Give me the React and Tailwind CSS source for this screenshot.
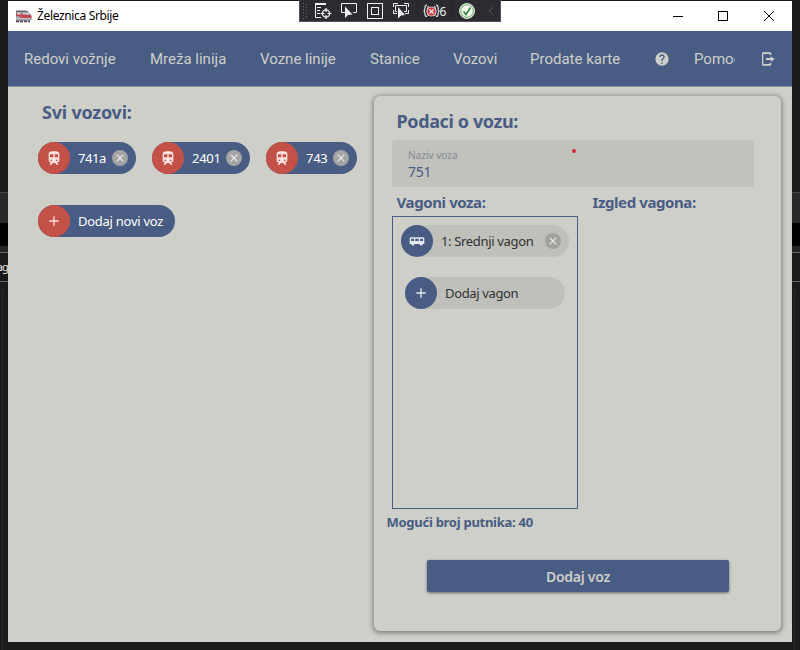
import React from "react";

const NAV = [
  { label: "Redovi vožnje", box: "w-[126px]" },
  { label: "Mreža linija", box: "w-[110px]" },
  { label: "Vozne linije", box: "w-[110px]" },
  { label: "Stanice", box: "w-[83px]" },
  { label: "Vozovi", box: "w-[77px]" },
  { label: "Prodate karte", box: "w-[125px]" },
];

const PATHS = {
  train:
    "M12 2C8 2 4 2.5 4 6V15.5A3.5 3.5 0 0 0 7.500 19L5.500 21V22H8L10.500 19.500H13.500L16 22H18.500V21L16.500 19A3.500 3.500 0 0 0 20 15.500V6C20 2.500 16.420 2 12 2M8 16.700A1.300 1.300 0 1 1 8 14.100A1.300 1.300 0 0 1 8 16.700M11 11H6V6.500H11V11M13 11V6.500H18V11H13M16 16.700A1.300 1.300 0 1 1 16 14.100A1.300 1.300 0 0 1 16 16.700Z",
  plus: "M19 13H13V19H11V13H5V11H11V5H13V11H19V13Z",
  wagon:
    "M3 6.500C1.900 6.500 1 7.400 1 8.500V16.500H3.500A2.300 2.300 0 0 0 8.100 16.500H15.900A2.300 2.300 0 0 0 20.500 16.500H23V8.500C23 7.400 22.100 6.500 21 6.500ZM3 8.500H7.500V12H3ZM9.500 8.500H14.500V12H9.500ZM16.500 8.500H21V12H16.500Z",
  help:
    "M15.07 11.25L14.17 12.17C13.45 12.89 13 13.5 13 15H11V14.5C11 13.39 11.45 12.39 12.17 11.67L13.41 10.41C13.78 10.05 14 9.55 14 9A2 2 0 0 0 10 9H8A4 4 0 0 1 16 9C16 9.88 15.64 10.67 15.07 11.25M13 19H11V17H13M12 2A10 10 0 1 0 12 22A10 10 0 0 0 12 2Z",
  exit:
    "M14.5 6V4.5H5V19.5H14.5V18H17V20C17 21 16.2 22 15 22H5C3.8 22 3 21.1 3 20V4C3 2.9 3.8 2 5 2H15C16.2 2 17 2.9 17 4V6ZM16 8L22 12L16 16V13.5H9V10.5H16Z",
};

function Icon({ name, className }) {
  return (
    <svg viewBox="0 0 24 24" className={className} fill="currentColor">
      <path d={PATHS[name]} />
    </svg>
  );
}

function Remove({ tone }) {
  return (
    <svg viewBox="0 0 16 16" className={"h-4 w-4 shrink-0 rounded-full " + tone}>
      <path d="M4.7 4.7L11.3 11.3M11.3 4.7L4.7 11.3" stroke="#ececea" strokeWidth="1.2" />
    </svg>
  );
}

function Chip({ icon, label, box, text, dark, removable }) {
  return (
    <div
      className={
        "flex h-8 shrink-0 items-center rounded-full " +
        (dark ? "bg-[#485c84] text-white " : "bg-[#bfc0b9] text-[#303134] ") +
        box
      }
    >
      <span
        className={
          "mr-2 flex h-8 w-8 shrink-0 items-center justify-center rounded-full " +
          (dark ? "bg-[#c35148] text-[#fbe3df]" : "bg-[#485c84] text-[#e6e9ee]")
        }
      >
        <Icon name={icon} className="h-4 w-4" />
      </span>
      <span className={"flex-1 text-[13px] leading-8 whitespace-nowrap " + text}>{label}</span>
      {removable && <Remove tone={dark ? "mr-2 bg-[#a3a4a3]" : "mr-2 bg-[#a1a29e]"} />}
    </div>
  );
}

function TrainLogo() {
  return (
    <svg viewBox="0 0 16 13" className="h-[13px] w-4">
      <path d="M0 1H11L15 4.5L16 9L14 11H0Z" fill="#9c9ca4" />
      <path d="M0 0.5H10L13 2H0Z" fill="#6d646b" />
      <path d="M0 3H11V5H15L15.800 8H5L3 6H0Z" fill="#c6474c" />
      <path d="M1 2.700H5V4.400H1ZM6.500 2.700H12L14 4.600H6.500Z" fill="#c9d3dc" />
      <path d="M0 8.500H15.500" stroke="#c4c4ca" />
      <path d="M0 11.500H14" stroke="#4c4045" strokeWidth="1.400" strokeDasharray="3 1" />
    </svg>
  );
}

function DebugBar() {
  return (
    <svg
      viewBox="0 0 202 22"
      className="absolute top-0 left-[299px] h-[22px] w-[202px]"
      fill="none"
      stroke="#f0f0f0"
      fontFamily='"Noto Sans", sans-serif'
    >
      <rect x="0.5" y="-0.5" width="201" height="22" fill="#2b2b31" stroke="#515156" />
      <path d="M4.500 3V19M7.500 4V19" stroke="#68686d" strokeDasharray="1 2" />
      <path d="M16 3.500H27M16.500 3V17.500H22M18 7.500H22M18 10.500H21M18 13.500H21" />
      <path d="M16 4H27" strokeWidth="2" />
      <circle cx="27" cy="13.500" r="3.600" strokeWidth="1.300" />
      <path d="M27 8V12M27 15V19M21.500 13.500H25.500M28.500 13.500H32.500" strokeWidth="1.200" />
      <path d="M46 12.500H42.500V3.500H57.500V12.500H54" />
      <path d="M46 6.500V18L49 15L53.500 14.500Z" fill="#f0f0f0" stroke="none" />
      <rect x="68.500" y="3.500" width="15" height="15" />
      <rect x="72.500" y="7.500" width="7" height="7" />
      <path d="M94.500 7V3.500H99M105 3.500H109.500V7M94.500 10V13.500H98M106 13.500H109.500V10" />
      <path d="M98 11.500H96.500V5.500H107.500V11.500H105" />
      <path d="M99 7V18.500L102 15.500L106 15Z" fill="#f0f0f0" stroke="none" />
      <path d="M118.500 3V19M153.500 3V19" stroke="#222226" />
      <path d="M128 5Q126 5 126 7.500Q126 11 124.500 11Q126 11 126 14.500Q126 16.500 128 16.500M137 5Q139 5 139 7.500Q139 11 140.500 11Q139 11 139 14.500Q139 16.500 137 16.500M129.500 6Q127 11 129.500 16M135.500 6Q138 11 135.500 16" strokeWidth="1.100" />
      <circle cx="132.500" cy="11.500" r="4.500" fill="#cf3a3e" stroke="#f3d8d8" strokeWidth="0.800" />
      <path d="M130.500 9.500L134.500 13.500M134.500 9.500L130.500 13.500" strokeWidth="1.200" />
      <text x="140.500" y="16" fontSize="12" fill="#f0f0f0" stroke="none">6</text>
      <circle cx="168" cy="11" r="7.500" fill="#f5f7f3" stroke="#dcebd8" />
      <circle cx="168" cy="11" r="6.300" stroke="#5fa35b" strokeWidth="1" />
      <path d="M164.500 11.500L167 14.500L171.500 7.500" stroke="#388a34" strokeWidth="1.700" />
      <path d="M194.500 7L190 11L194.500 15" stroke="#58585d" />
    </svg>
  );
}

function Edge({ children }) {
  return (
    <div className="flex h-[650px] w-2 shrink-0 flex-col overflow-hidden bg-[#1c1c1c]">
      <div className="h-[192px] shrink-0" />
      <div className="h-[31px] shrink-0 border-t border-[#444] bg-[#292929]" />
      <div className="h-[23px] shrink-0 bg-black" />
      <div className="h-[6px] shrink-0 bg-[#242424]" />
      <div className="flex h-[30px] shrink-0 items-center justify-end border-y border-[#626262] bg-[#1b1b1e] text-[11px] tracking-[-0.8px] whitespace-nowrap text-[#e4e4e4]">
        {children}
      </div>
      <div className="h-2 shrink-0" />
      <div className="ml-[2px] w-px flex-1 bg-[#2b2b2b]" />
    </div>
  );
}

export default function App() {
  return (
    <div className="relative flex h-[650px] w-[800px] overflow-hidden bg-[#1c1c1c] font-['Noto_Sans',sans-serif]">
      <Edge>ag</Edge>
      <main className="mt-px flex h-[641px] w-[784px] shrink-0 flex-col bg-[#cecfc8]">
        <header className="flex h-[30px] shrink-0 items-center bg-white pl-2">
          <TrainLogo />
          <span className="ml-[5px] text-[12px] tracking-[-0.35px] text-black">Železnica Srbije</span>
          <svg viewBox="0 0 104 14" className="mr-[18px] ml-auto h-[14px] w-[104px]" fill="none" stroke="#000">
            <path d="M3 7.500H13" />
            <rect x="48.500" y="2.500" width="9" height="9" />
            <path d="M94 2L104 12M104 2L94 12" />
          </svg>
        </header>

        <nav className="flex h-[56px] shrink-0 items-center border-b border-[#8991a0] bg-[#485c84] pl-4 font-['Roboto',sans-serif] text-[15px] text-[#cecfc8]">
          {NAV.map((n) => (
            <span key={n.label} className={"shrink-0 pt-[2px] whitespace-nowrap " + n.box}>
              {n.label}
            </span>
          ))}
          <Icon name="help" className="h-4 w-4 shrink-0 -ml-[1px]" />
          <span className="ml-[24px] w-[41px] shrink-0 overflow-hidden pt-[2px] whitespace-nowrap">Pomoć</span>
          <Icon name="exit" className="ml-[25px] h-4 w-4 shrink-0" />
        </nav>

        <div className="flex flex-1 pt-[9px]">
          <section className="w-[366px] shrink-0 pl-[30px]">
            <h1 className="ml-1 h-9 text-[18px] leading-[32px] font-bold tracking-[-0.22px] text-[#485c84]">Svi vozovi:</h1>
            <div className="mt-[10px] flex gap-4">
              <Chip dark removable icon="train" label="741a" box="w-[98px]" text="tracking-[-0.4px]" />
              <Chip dark removable icon="train" label="2401" box="w-[98px]" text="tracking-[-0.3px]" />
              <Chip dark removable icon="train" label="743" box="w-[91px]" text="tracking-[-0.3px]" />
            </div>
            <div className="mt-[31px] flex">
              <Chip dark icon="plus" label="Dodaj novi voz" box="w-[137px]" text="tracking-[-0.26px]" />
            </div>
          </section>

          <section className="flex h-[535px] w-[407px] shrink-0 flex-col rounded-md bg-[#cecfc8] pt-[8px] shadow-[0_1px_5px_1px_rgba(0,0,0,0.4)]">
            <h2 className="ml-[22.5px] h-9 text-[18px] leading-[34px] font-bold tracking-[-0.38px] text-[#485c84]">Podaci o vozu:</h2>
            <div className="ml-[18px] flex h-[47px] w-[362px] shrink-0 rounded-t bg-[#c1c2bb] pl-4">
              <div className="w-[164px]">
                <div className="mt-[8px] text-[10px] leading-[14px] text-[#868d98]">Naziv voza</div>
                <div className="mt-px text-[14px] leading-[18px] tracking-[-0.3px] text-[#485c84]">751</div>
              </div>
              <span className="mt-[9px] h-1 w-1 rounded-full bg-[#d32731]" />
            </div>
            <div className="mt-[5px] flex h-6 pl-[22.5px] text-[15px] leading-[20px] font-bold tracking-[-0.4px] text-[#485c84]">
              <h3 className="w-[196px]">Vagoni voza:</h3>
              <h3>Izgled vagona:</h3>
            </div>
            <div className="ml-[18px] flex h-[293px] w-[186px] flex-col border border-[#485c84] pt-2">
              <div className="ml-2">
                <Chip removable icon="wagon" label="1: Srednji vagon" box="w-[168px]" text="tracking-[-0.34px]" />
              </div>
              <div className="mt-5 ml-3">
                <Chip icon="plus" label="Dodaj vagon" box="w-[160px]" text="tracking-[-0.36px]" />
              </div>
            </div>
            <p className="ml-[12.5px] mt-[3px] h-5 text-[13px] leading-5 font-bold tracking-[-0.27px] text-[#485c84]">Mogući broj putnika: 40</p>
            <button className="mt-[28px] ml-[53px] h-8 w-[302px] shrink-0 rounded-[2px] bg-[#485c84] text-[14px] font-semibold tracking-[-0.27px] text-[#cecfc8] shadow-[0_1px_3px_rgba(0,0,0,0.5)]">
              Dodaj voz
            </button>
          </section>
        </div>
      </main>
      <Edge />
      <DebugBar />
    </div>
  );
}
